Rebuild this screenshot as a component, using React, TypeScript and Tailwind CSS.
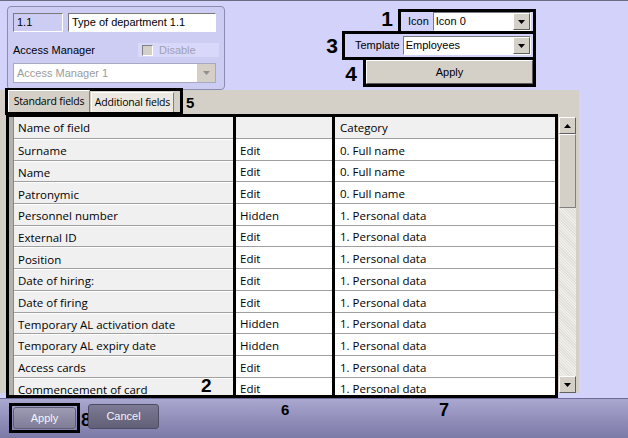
import React from 'react';

const names = [
  'Surname',
  'Name',
  'Patronymic',
  'Personnel number',
  'External ID',
  'Position',
  'Date of hiring:',
  'Date of firing',
  'Temporary AL activation date',
  'Temporary AL expiry date',
  'Access cards',
  'Commencement of card',
];
const modes = ['Edit', 'Edit', 'Edit', 'Hidden', 'Edit', 'Edit', 'Edit', 'Edit', 'Hidden', 'Hidden', 'Edit', 'Edit'];
const cats = [
  '0. Full name',
  '0. Full name',
  '0. Full name',
  '1. Personal data',
  '1. Personal data',
  '1. Personal data',
  '1. Personal data',
  '1. Personal data',
  '1. Personal data',
  '1. Personal data',
  '1. Personal data',
  '1. Personal data',
];

const sans = { fontFamily: '"Liberation Sans", Arial, sans-serif' };
const grid = { fontFamily: '"Open Sans", "Noto Sans", sans-serif' };

const Arrow = ({ up = false, color = '#000' }: { up?: boolean; color?: string }) => (
  <svg width="7" height="4" viewBox="0 0 7 4">
    <path d={up ? 'M0 4 L3.5 0 L7 4 Z' : 'M0 0 L7 0 L3.5 4 Z'} fill={color} />
  </svg>
);

const ComboButton = ({ color = '#000' }: { color?: string }) => (
  <div className="w-[17px] h-full flex items-center justify-center bg-[#d4d0c8] border border-t-white border-l-white border-b-[#606060] border-r-[#606060]">
    <Arrow color={color} />
  </div>
);

const Num = ({ n, className }: { n: string; className: string }) => (
  <span className={`font-bold leading-none text-black ${className}`} style={sans}>
    {n}
  </span>
);

const Column = ({
  header,
  items,
  shaded,
  strip,
  pad,
  className,
}: {
  header: string;
  items: string[];
  shaded: boolean;
  strip?: boolean;
  pad: string;
  className: string;
}) => (
  <div className={`h-[284px] border-black overflow-hidden flex shrink-0 ${className}`} style={grid}>
    {strip && <div className="w-[5px] h-full bg-[#b4b2ac] border-r border-r-[#8c8a84]" />}
    <div className="flex-1 flex flex-col">
      <div className={`h-[22px] shrink-0 flex items-center pt-[1px] bg-[#f0f0f0] border-b border-b-[#a0a0a0] text-[11.5px] text-black ${pad}`}>
        {header}
      </div>
      {items.map((t, i) => (
        <div
          key={i}
          className={`h-[21.7px] shrink-0 flex items-center pt-[2px] border-b border-b-[#a0a0a0] text-[11.5px] text-black whitespace-nowrap ${pad} ${
            shaded ? 'bg-[#f0f0f0] border-t border-t-white' : 'bg-white'
          }`}
        >
          {t}
        </div>
      ))}
    </div>
  </div>
);

const App: React.FC = () => {
  return (
    <div className="w-[628px] h-[438px] bg-[#d2d2fb] flex flex-col overflow-hidden relative text-black">
      <div className="h-[1px] bg-[#6c6c80] shrink-0" />

      {/* Top area */}
      <div className="h-[89px] shrink-0 flex">
        {/* Group box */}
        <div className="ml-[7px] mt-[5px] w-[218px] h-[84px] rounded-[4px] border border-[#8c8cb0] bg-[#cdcdf4] px-[5px] pt-[6px] flex flex-col" style={sans}>
          <div className="flex gap-[5px] h-[19px]">
            <div className="w-[50px] h-full bg-[#cdcdf4] border border-t-[#7a7a7a] border-l-[#7a7a7a] border-b-white border-r-white flex items-center pl-[3px] text-[11px]">
              1.1
            </div>
            <div className="w-[148px] h-full bg-white border border-t-[#7a7a7a] border-l-[#7a7a7a] border-b-white border-r-white flex items-center pl-[3px] text-[11px]">
              Type of department 1.1
            </div>
          </div>
          <div className="flex items-center mt-[11px] h-[14px]">
            <span className="text-[11px] w-[125px]">Access Manager</span>
            <div className="flex-1 h-full bg-[#d8d8fa] flex items-center pl-[4px] gap-[6px]">
              <div className="w-[11px] h-[11px] bg-[#d4d0c8] border border-t-[#808080] border-l-[#808080] border-b-white border-r-white" />
              <span className="text-[11px] text-[#a0a0b0]">Disable</span>
            </div>
          </div>
          <div className="mt-[6px] h-[20px] w-[203px] bg-white border border-[#a8a8c0] flex items-center">
            <span className="flex-1 pl-[3px] text-[11px] text-[#9c9c9c]">Access Manager 1</span>
            <div className="w-[18px] h-full flex items-center justify-center bg-[#d4d0c8]">
              <Arrow color="#909090" />
            </div>
          </div>
        </div>

        {/* Right controls */}
        <div className="ml-auto mr-[92px] flex flex-col items-end pt-[8px]" style={sans}>
          <div className="flex items-center">
            <Num n="1" className="text-[21px] mr-[5px] mt-[-6px]" />
            <div className="w-[138px] h-[25px] border-[3px] border-black flex items-center pl-[7px] pr-[2px] gap-[4px]">
              <span className="text-[11px]">Icon</span>
              <div className="flex-1 h-[19px] bg-white border border-t-[#7a7a7a] border-l-[#7a7a7a] border-b-white border-r-white flex items-center">
                <span className="flex-1 pl-[2px] text-[11px]">Icon 0</span>
                <ComboButton />
              </div>
            </div>
          </div>
          <div className="flex items-center -mt-[3px]">
            <Num n="3" className="text-[21px] mr-[4px]" />
            <div className="w-[194px] h-[29px] border-[3px] border-black flex items-center pl-[10px] pr-[2px] gap-[3px]">
              <span className="text-[11px]">Template</span>
              <div className="flex-1 h-[19px] bg-white border border-t-[#7a7a7a] border-l-[#7a7a7a] border-b-white border-r-white flex items-center">
                <span className="flex-1 pl-[2px] text-[11px]">Employees</span>
                <ComboButton />
              </div>
            </div>
          </div>
          <div className="flex items-end -mt-[3px]">
            <Num n="4" className="text-[21px] mr-[6px] mb-[3px]" />
            <div className="w-[173px] h-[30px] border-[3px] border-black p-[0px]">
              <div className="w-full h-full bg-[#d4d0c8] border border-t-white border-l-white border-b-[#5a5a5a] border-r-[#5a5a5a] flex items-center justify-center text-[11px]">
                Apply
              </div>
            </div>
          </div>
        </div>
      </div>

      {/* Tab panel */}
      <div className="w-[579px] h-[303px] shrink-0 bg-[#d4d0c8] flex flex-col relative">
        <div className="h-[24px] shrink-0 flex items-end pl-[5px]">
          <div className="w-[178px] h-[27px] border-[3px] border-black flex items-end bg-[#d4d0c8] -mb-[1px] relative z-10">
            <div className="w-[82px] h-[22px] bg-[#d4d0c8] border border-t-white border-l-white border-r-[#808080] border-b-0 flex items-center justify-center text-[10.5px] whitespace-nowrap tracking-[-0.2px]" style={grid}>
              Standard fields
            </div>
            <div className="w-[83px] h-[20px] ml-[1px] bg-[#ece9e2] border border-t-white border-l-white border-r-[#808080] border-b-0 flex items-center justify-center text-[10.5px] whitespace-nowrap tracking-[-0.2px]" style={grid}>
              Additional fields
            </div>
          </div>
          <Num n="5" className="text-[15px] ml-[3px] mb-[4px]" />
        </div>

        <div className="flex pl-[6px] items-start">
          <Column header="Name of field" items={names} shaded strip pad="pl-[4px]" className="w-[230px] border-[3px]" />
          <Column header="" items={modes} shaded={false} pad="pl-[4px]" className="w-[99px] border-y-[3px] border-r-[3px]" />
          <Column header="Category" items={cats} shaded={false} pad="pl-[5px]" className="w-[223px] border-y-[3px] border-r-[3px]" />

          {/* Scrollbar */}
          <div className="w-[17px] h-[276px] mt-[3px] ml-[1px] flex flex-col bg-[#e8e6e0]">
            <div className="h-[17px] shrink-0 bg-[#d4d0c8] border border-t-white border-l-white border-b-[#606060] border-r-[#606060] flex items-center justify-center">
              <Arrow up />
            </div>
            <div className="h-[74px] shrink-0 bg-[#d4d0c8] border border-t-white border-l-white border-b-[#808080] border-r-[#808080]" />
            <div className="flex-1 bg-[repeating-linear-gradient(45deg,#f0eee8_0px,#f0eee8_1px,#e2e0da_1px,#e2e0da_2px)]" />
            <div className="h-[17px] shrink-0 bg-[#d4d0c8] border border-t-white border-l-white border-b-[#606060] border-r-[#606060] flex items-center justify-center">
              <Arrow />
            </div>
          </div>
        </div>

        <Num n="2" className="absolute left-[201px] top-[286px] text-[19px]" />
      </div>

      <div className="h-[5px] shrink-0" />

      {/* Bottom bar */}
      <div className="h-[40px] shrink-0 bg-gradient-to-b from-[#aaa8d0] to-[#7b79a6] border-t border-t-[#6e6c98] flex items-start pl-[9px] pt-[4px] relative" style={sans}>
        <div className="w-[71px] h-[30px] border-[3px] border-black p-[1px]">
          <div className="w-full h-full rounded-[3px] bg-gradient-to-b from-[#9e9cb4] to-[#7e7c96] border border-[#5e5c74] flex items-center justify-center text-[11px] text-[#f4f4f8]">
            Apply
          </div>
        </div>
        <Num n="8" className="text-[18px] ml-[1px] mt-[8px]" />
        <div className="w-[71px] h-[25px] ml-[-3px] mt-[1px] rounded-[3px] bg-gradient-to-b from-[#7c7a94] to-[#626078] border border-[#4e4c64] flex items-center justify-center text-[11px] text-[#f4f4f8]">
          Cancel
        </div>
        <Num n="6" className="absolute left-[281px] top-[3px] text-[15px]" />
        <Num n="7" className="absolute left-[439px] top-[2px] text-[18px]" />
      </div>
    </div>
  );
};

export default App;
